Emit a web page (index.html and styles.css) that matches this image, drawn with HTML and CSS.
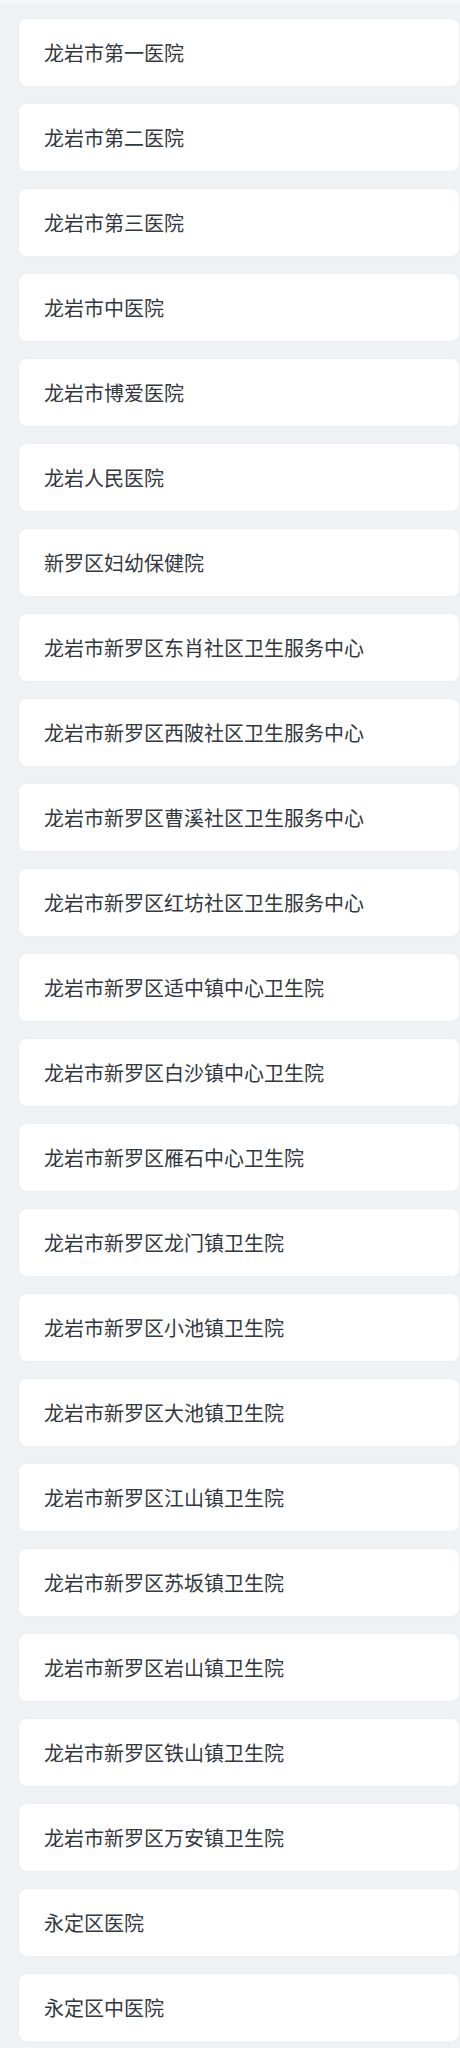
FILE: index.html
```html
<!DOCTYPE html>
<html lang="zh-CN">
<head>
<meta charset="utf-8">
<link rel="stylesheet" href="styles.css">
</head>
<body>
<div class="topline"></div>
<ul class="list">
  <li class="card">龙岩市第一医院</li>
  <li class="card">龙岩市第二医院</li>
  <li class="card">龙岩市第三医院</li>
  <li class="card">龙岩市中医院</li>
  <li class="card">龙岩市博爱医院</li>
  <li class="card">龙岩人民医院</li>
  <li class="card">新罗区妇幼保健院</li>
  <li class="card">龙岩市新罗区东肖社区卫生服务中心</li>
  <li class="card">龙岩市新罗区西陂社区卫生服务中心</li>
  <li class="card">龙岩市新罗区曹溪社区卫生服务中心</li>
  <li class="card">龙岩市新罗区红坊社区卫生服务中心</li>
  <li class="card">龙岩市新罗区适中镇中心卫生院</li>
  <li class="card">龙岩市新罗区白沙镇中心卫生院</li>
  <li class="card">龙岩市新罗区雁石中心卫生院</li>
  <li class="card">龙岩市新罗区龙门镇卫生院</li>
  <li class="card">龙岩市新罗区小池镇卫生院</li>
  <li class="card">龙岩市新罗区大池镇卫生院</li>
  <li class="card">龙岩市新罗区江山镇卫生院</li>
  <li class="card">龙岩市新罗区苏坂镇卫生院</li>
  <li class="card">龙岩市新罗区岩山镇卫生院</li>
  <li class="card">龙岩市新罗区铁山镇卫生院</li>
  <li class="card">龙岩市新罗区万安镇卫生院</li>
  <li class="card">永定区医院</li>
  <li class="card">永定区中医院</li>
</ul>
</body>
</html>
```
FILE: styles.css
```css
html, body {
  margin: 0;
  padding: 0;
  background: #eef2f5;
}
body {
  font-family: "Noto Sans CJK SC", "Noto Sans", sans-serif;
  color: #333840;
}
.topline {
  height: 4px;
  background: #f4f6f8;
}
.list {
  list-style: none;
  margin: 0;
  padding: 15px 1px 0 19px;
  display: flex;
  flex-direction: column;
  gap: 18px;
}
.card {
  height: 67px;
  box-sizing: border-box;
  background: #ffffff;
  border-radius: 8px;
  box-shadow: 0 0 2px rgba(0, 0, 0, 0.05);
  display: flex;
  align-items: center;
  padding-left: 25px;
  font-size: 20px;
  line-height: 1;
}
```
